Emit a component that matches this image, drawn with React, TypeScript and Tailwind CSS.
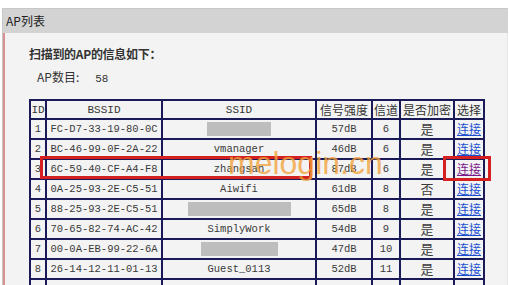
import React from "react";

type Row = {
  id: number;
  bssid: string;
  ssid: string;
  mask?: number; // width of a redacted block instead of the ssid
  signal: string;
  channel: string;
  enc: string;
  visited?: boolean;
};

const rows: Row[] = [
  { id: 1, bssid: "FC-D7-33-19-80-0C", ssid: "", mask: 64, signal: "57dB", channel: "6", enc: "是" },
  { id: 2, bssid: "BC-46-99-0F-2A-22", ssid: "vmanager", signal: "46dB", channel: "6", enc: "是" },
  { id: 3, bssid: "6C-59-40-CF-A4-F8", ssid: "zhangsan", signal: "87dB", channel: "6", enc: "是", visited: true },
  { id: 4, bssid: "0A-25-93-2E-C5-51", ssid: "Aiwifi", signal: "61dB", channel: "8", enc: "否" },
  { id: 5, bssid: "88-25-93-2E-C5-51", ssid: "", mask: 103, signal: "65dB", channel: "8", enc: "是" },
  { id: 6, bssid: "70-65-82-74-AC-42", ssid: "SimplyWork", signal: "54dB", channel: "9", enc: "是" },
  { id: 7, bssid: "00-0A-EB-99-22-6A", ssid: "", mask: 77, signal: "47dB", channel: "10", enc: "是" },
  { id: 8, bssid: "26-14-12-11-01-13", ssid: "Guest_0113", signal: "52dB", channel: "11", enc: "是" },
];

const cjk = "font-['SimSun','Noto_Sans_CJK_SC',sans-serif]";
const mono = "font-['Liberation_Mono','Noto_Sans_CJK_SC',monospace]";
const cell = "border-2 border-[#1a1a58] p-0 text-center";

export default function App() {
  return (
    <div className={`relative h-[285px] w-[509px] overflow-hidden bg-white text-[#333] ${cjk}`}>
      <div className="h-[8px]" />
      <div className="ml-[2px] mr-[1px] border-t border-l border-[#c8c8c8]">
        {/* HEADER */}
        <div className="h-[24px] bg-[#d3d3d3] pl-[3px] text-[12px] leading-[24px] text-[#222]">AP列表</div>

        {/* BODY */}
        <div className="h-[260px] border-l-2 border-r border-l-[#d89090] border-r-[#e6e6e6] bg-[#f3f3f3] pl-[24px] pt-[14px]">
          <p className="text-[12px] font-bold leading-[14px] tracking-[-0.3px]">扫描到的AP的信息如下：</p>
          <p className="ml-[8px] mt-[9px] text-[12px] leading-[14px]">
            AP数目:<span className={`${mono} ml-[16px] text-[11px]`}>58</span>
          </p>

          <table className="mt-[13px] table-fixed border-collapse border-2 border-[#1a1a58] bg-[#f3f3f3]">
            <colgroup>
              <col className="w-[16px]" />
              <col className="w-[116px]" />
              <col className="w-[154px]" />
              <col className="w-[56px]" />
              <col className="w-[28px]" />
              <col className="w-[54px]" />
              <col className="w-[30px]" />
            </colgroup>
            <thead>
              <tr className="h-[19px] text-[12px] leading-[14px]">
                <th className={`${cell} ${mono} text-[11px] font-normal`}>ID</th>
                <th className={`${cell} ${mono} text-[11px] font-normal`}>BSSID</th>
                <th className={`${cell} ${mono} text-[11px] font-normal`}>SSID</th>
                <th className={`${cell} font-normal`}>信号强度</th>
                <th className={`${cell} font-normal`}>信道</th>
                <th className={`${cell} font-normal`}>是否加密</th>
                <th className={`${cell} font-normal`}>选择</th>
              </tr>
            </thead>
            <tbody>
              {rows.map((r) => (
                <tr key={r.id} className={`h-[20px] ${mono} text-[10.5px] leading-[14px] text-[#3a3a3a]`}>
                  <td className={cell}>{r.id}</td>
                  <td className={cell}>{r.bssid}</td>
                  <td className={cell}>
                    {r.mask ? (
                      <div className="mx-auto h-[14px] bg-[#bdbdbd]" style={{ width: r.mask }} />
                    ) : (
                      r.ssid
                    )}
                  </td>
                  <td className={cell}>{r.signal}</td>
                  <td className={cell}>{r.channel}</td>
                  <td className={`${cell} ${cjk} text-[13px]`}>{r.enc}</td>
                  <td className={`${cell} ${cjk} text-[12px]`}>
                    <a
                      href="#"
                      className={`underline ${r.visited ? "text-[#7a1a8a]" : "text-[#1a4fd0]"}`}
                    >
                      连接
                    </a>
                  </td>
                </tr>
              ))}
              <tr className="h-[20px]">
                {[0, 1, 2, 3, 4, 5, 6].map((i) => (
                  <td key={i} className={cell} />
                ))}
              </tr>
            </tbody>
          </table>
        </div>
      </div>

      {/* OVERLAYS: highlight boxes + watermark */}
      <div className="absolute left-[40px] top-[156px] h-[23px] w-[272px] border-[3px] border-[#d42020]" />
      <div className="absolute left-[443px] top-[156px] h-[25px] w-[48px] border-[3px] border-[#d42020]" />
      <div className="pointer-events-none absolute left-[228px] top-[145px] font-['Liberation_Sans',sans-serif] text-[32px] leading-[36px] text-[#f2a23a]/80">
        melogin.cn
      </div>
    </div>
  );
}
